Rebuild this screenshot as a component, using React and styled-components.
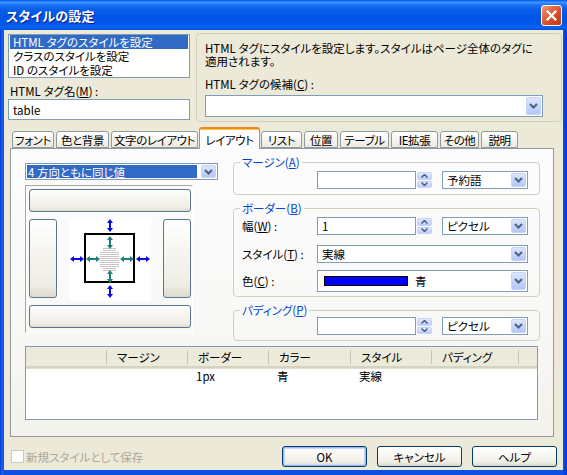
import React from "react";
import styled, { createGlobalStyle } from "styled-components";

const FONT = `"Noto Sans CJK JP", "Noto Sans", sans-serif`;

const Global = createGlobalStyle`
  html, body { margin: 0; padding: 0; background: #ece9d8; }
  body { font-family: ${FONT}; font-size: 11.5px; color: #000; font-feature-settings: "palt"; }
  * { box-sizing: border-box; }
  u { text-decoration: underline; text-underline-offset: 1px; }
`;

const Window = styled.div`
  width: 567px;
  height: 475px;
  display: flex;
  flex-direction: column;
  background: linear-gradient(to right, #0831d9 0, #166aee 2px, #0d4fe0 4px, #0d4fe0 563px, #0831d9 567px);
  overflow: hidden;
`;

const TitleBar = styled.div`
  height: 30px;
  flex: none;
  display: flex;
  align-items: center;
  justify-content: space-between;
  padding: 1px 5px 0 6px;
  background: linear-gradient(
    to bottom,
    #0058ee 0%,
    #3d95ff 8%,
    #1f74f7 16%,
    #0a5fe8 32%,
    #0055e5 55%,
    #0058ea 80%,
    #0a63f0 92%,
    #0050d8 100%
  );
`;

const Title = styled.div`
  color: #fff;
  font-weight: bold;
  font-size: 13px;
  letter-spacing: 0.2px;
  text-shadow: 1px 1px 0 #0a1e8c;
`;

const CloseButton = styled.div`
  width: 21px;
  height: 21px;
  border: 1px solid #fff;
  border-radius: 3px;
  background: linear-gradient(135deg, #f09a7c 0%, #e06a44 35%, #d2451e 70%, #c33a15 100%);
  display: flex;
  align-items: center;
  justify-content: center;
`;

const Client = styled.div`
  flex: 1;
  margin: 0 4px 5px 4px;
  background: #ece9d8;
  display: flex;
  flex-direction: column;
`;

const TopSection = styled.div`
  display: flex;
  align-items: flex-start;
  gap: 6px;
  padding: 3px 1px 0 4px;
`;

const LeftCol = styled.div`
  width: 182px;
  margin-top: 1px;
  display: flex;
  flex-direction: column;
`;

const ListBox = styled.div`
  height: 44px;
  border: 1px solid #7f9db9;
  background: #fff;
  padding: 0 1px;
`;

const ListItem = styled.div`
  height: 14px;
  line-height: 14px;
  padding-left: 3px;
  white-space: nowrap;
  background: ${(p) => (p.$sel ? "#316ac5" : "transparent")};
  color: ${(p) => (p.$sel ? "#fff" : "#000")};
`;

const FieldLabel = styled.div`
  line-height: 14px;
  white-space: nowrap;
  margin-top: ${(p) => p.$mt || 0}px;
  padding-left: ${(p) => p.$pl || 0}px;
`;

const TextBox = styled.div`
  height: ${(p) => p.$h || 21}px;
  margin-top: ${(p) => p.$mt || 0}px;
  border: 1px solid #7f9db9;
  background: #fff;
  display: flex;
  align-items: center;
  padding-left: 4px;
`;

const InfoPanel = styled.div`
  width: 366px;
  height: 89px;
  border: 1px solid #d0d0bf;
  border-radius: 4px;
  padding: 8px 0 0 8px;
  display: flex;
  flex-direction: column;
`;

const InfoText = styled.div`
  line-height: 13px;
  white-space: nowrap;
`;

const ComboBox = styled.div`
  display: flex;
  align-items: stretch;
  width: ${(p) => p.$w}px;
  height: ${(p) => p.$h || 18}px;
  margin-top: ${(p) => p.$mt || 0}px;
  border: 1px solid #7f9db9;
  background: #fff;
  padding: 1px;
  flex: none;
`;

const ComboText = styled.div`
  flex: 1;
  display: flex;
  align-items: center;
  gap: 7px;
  padding-left: ${(p) => p.$pl ?? 3}px;
  margin-right: ${(p) => (p.$sel ? 4 : 0)}px;
  white-space: nowrap;
  background: ${(p) => (p.$sel ? "#316ac5" : "transparent")};
  color: ${(p) => (p.$sel ? "#fff" : "#000")};
`;

const DropButton = styled.div`
  width: 15px;
  flex: none;
  border: 1px solid #c3d3fd;
  border-radius: 2px;
  background: linear-gradient(to bottom, #dce6fd 0%, #c6d6fb 50%, #b4c8f6 100%);
  display: flex;
  align-items: center;
  justify-content: center;
`;

const SpinWrap = styled.div`
  display: flex;
  align-items: stretch;
  height: 18px;
  flex: none;
  margin-right: 10px;
`;

const SpinInput = styled.div`
  width: 99px;
  border: 1px solid #7f9db9;
  background: #fff;
  display: flex;
  align-items: center;
  padding-left: 4px;
`;

const SpinButtons = styled.div`
  width: 16px;
  display: flex;
  flex-direction: column;
  gap: 1px;
  padding: 1px 0 1px 1px;
`;

const SpinHalf = styled.div`
  flex: 1;
  border: 1px solid #c3d3fd;
  border-radius: 2px;
  background: linear-gradient(to bottom, #dfe8fd, #bccef8);
  display: flex;
  align-items: center;
  justify-content: center;
`;

const TabStrip = styled.div`
  display: flex;
  align-items: flex-end;
  gap: 2px;
  height: 21px;
  margin-top: 5px;
  padding-left: 8px;
`;

const Tab = styled.div`
  position: relative;
  width: ${(p) => p.$w}px;
  height: ${(p) => (p.$active ? 22 : 17)}px;
  margin: ${(p) => (p.$active ? "0 -1px -1px -1px" : "0")};
  z-index: ${(p) => (p.$active ? 2 : 1)};
  border: 1px solid #919b9c;
  border-bottom: ${(p) => (p.$active ? "none" : "1px solid #919b9c")};
  border-top: ${(p) => (p.$active ? "2px solid #e68b2c" : "1px solid #919b9c")};
  border-radius: 3px 3px 0 0;
  box-shadow: ${(p) => (p.$active ? "inset 0 1px 0 #ffc83c" : "none")};
  background: ${(p) =>
    p.$active ? "#fcfcfe" : "linear-gradient(to bottom, #ffffff 0%, #f6f5f1 50%, #ebe9e0 100%)"};
  display: flex;
  align-items: center;
  justify-content: center;
  white-space: nowrap;
  line-height: 12px;
  letter-spacing: -0.4px;
  padding-top: ${(p) => (p.$active ? 1 : 0)}px;
`;

const TabPanel = styled.div`
  margin-left: 6px;
  width: 544px;
  height: 289px;
  border: 1px solid #919b9c;
  background: linear-gradient(to bottom, #fcfcfe 0%, #f8f8f6 60%, #f3f2ec 100%);
  padding: 7px 0 0 14px;
  display: flex;
  flex-direction: column;
`;

const PanelTop = styled.div`
  display: flex;
  align-items: flex-start;
  gap: 15px;
`;

const LeftPane = styled.div`
  width: 193px;
  margin-top: 7px;
  display: flex;
  flex-direction: column;
`;

const PreviewFrame = styled.div`
  width: 168px;
  margin-top: 5px;
  border-top: 1px solid #aca899;
  border-left: 1px solid #aca899;
  border-right: 1px solid #fff;
  border-bottom: 1px solid #fff;
  padding: 3px 1px 4px 3px;
  display: flex;
  flex-direction: column;
  gap: 7px;
`;

const SideButton = styled.div`
  height: ${(p) => p.$h}px;
  border: 1px solid #5f7590;
  border-radius: 3px;
  background: linear-gradient(to bottom, #ffffff 0%, #f6f5f0 40%, #eeede5 85%, #dedbce 100%);
`;

const MiddleRow = styled.div`
  height: 79px;
  display: grid;
  grid-template-columns: 28px 1fr 28px;
  align-items: stretch;
`;

const DiagramArea = styled.div`
  width: 82px;
  justify-self: center;
  background: #fff;
`;

const RightPane = styled.div`
  width: 307px;
  display: flex;
  flex-direction: column;
  gap: 7px;
`;

const Group = styled.fieldset`
  margin: 0;
  min-width: 0;
  padding: ${(p) => p.$pt ?? 3}px 8px ${(p) => p.$pb ?? 5}px 8px;
  border: 1px solid #d0d0bf;
  border-radius: 4px;
  display: flex;
  flex-direction: column;
`;

const Legend = styled.legend`
  padding: 0 2px;
  margin-left: -2px;
  line-height: 12px;
  color: #0046d5;
  white-space: nowrap;
`;

const Row = styled.div`
  display: flex;
  align-items: center;
  margin-top: ${(p) => p.$mt || 0}px;
`;

const RowLabel = styled.div`
  width: 75px;
  flex: none;
  white-space: nowrap;
`;

const Swatch = styled.div`
  width: 84px;
  height: 10px;
  margin-left: 5px;
  background: #0000ff;
  border: 1px solid #000;
`;

const ListView = styled.div`
  width: 513px;
  height: 74px;
  margin-top: 5px;
  border: 1px solid #7f9db9;
  background: #fff;
  display: flex;
  flex-direction: column;
`;

const COLS = "81px 81px 81px 82px 81px 87px 1fr";

const HeaderRow = styled.div`
  display: grid;
  grid-template-columns: ${COLS};
  height: 21px;
  background: #ebeadb;
  border-bottom: 2px solid #d6d2c2;
  box-shadow: 0 1px 0 #e2decd;
`;

const HeaderCell = styled.div`
  display: flex;
  align-items: center;
  padding-left: 10px;
  white-space: nowrap;
  background: ${(p) =>
    p.$last ? "none" : "linear-gradient(#c7c5b2, #c7c5b2) right 3px / 1px 14px no-repeat"};
`;

const DataRow = styled.div`
  display: grid;
  grid-template-columns: ${COLS};
  height: 14px;
  margin-top: 1px;
`;

const DataCell = styled.div`
  line-height: 14px;
  padding-left: 8px;
  white-space: nowrap;
`;

const BottomBar = styled.div`
  display: flex;
  align-items: center;
  margin-top: 9px;
  padding: 0 6px 0 7px;
`;

const CheckBox = styled.div`
  width: 13px;
  height: 13px;
  border: 1px solid #cac8bb;
  background: #fff;
`;

const DisabledText = styled.div`
  color: #aca899;
  margin-left: 2px;
  white-space: nowrap;
`;

const ButtonGroup = styled.div`
  margin-left: auto;
  display: flex;
  gap: 10px;
`;

const PushButton = styled.div`
  width: 85px;
  height: 21px;
  border: 1px solid #003c74;
  border-radius: 3px;
  background: linear-gradient(to bottom, #ffffff 0%, #f7f6f1 45%, #efeee7 80%, #d8d5c8 100%);
  box-shadow: ${(p) => (p.$default ? "inset 0 0 0 1px #9cb8ef, inset 0 0 0 2px #c6d7f7" : "none")};
  display: flex;
  align-items: center;
  justify-content: center;
  white-space: nowrap;
`;

/* ---------- drawings ---------- */

const Chevron = () => (
  <svg width="9" height="6" viewBox="0 0 9 6">
    <path d="M1 1 L4.5 4.5 L8 1" fill="none" stroke="#4d6185" strokeWidth="2" />
  </svg>
);

const SpinArrow = ({ up }) => (
  <svg width="7" height="4" viewBox="0 0 7 4">
    {up ? (
      <path d="M0.5 3.5 L3.5 0.5 L6.5 3.5" fill="none" stroke="#4d6185" strokeWidth="1.5" />
    ) : (
      <path d="M0.5 0.5 L3.5 3.5 L6.5 0.5" fill="none" stroke="#4d6185" strokeWidth="1.5" />
    )}
  </svg>
);

const CloseX = () => (
  <svg width="11" height="11" viewBox="0 0 11 11">
    <path d="M1.5 1.5 L9.5 9.5 M9.5 1.5 L1.5 9.5" stroke="#fff" strokeWidth="2.2" strokeLinecap="square" />
  </svg>
);

const ArrowV = ({ x, y1, y2, c }) => (
  <g fill={c}>
    <rect x={x - 1} y={y1 + 3} width="2" height={y2 - y1 - 6} />
    <polygon points={`${x},${y1} ${x - 3},${y1 + 4} ${x + 3},${y1 + 4}`} />
    <polygon points={`${x},${y2} ${x - 3},${y2 - 4} ${x + 3},${y2 - 4}`} />
  </g>
);

const ArrowH = ({ y, x1, x2, c }) => (
  <g fill={c}>
    <rect x={x1 + 3} y={y - 1} width={x2 - x1 - 6} height="2" />
    <polygon points={`${x1},${y} ${x1 + 4},${y - 3} ${x1 + 4},${y + 3}`} />
    <polygon points={`${x2},${y} ${x2 - 4},${y - 3} ${x2 - 4},${y + 3}`} />
  </g>
);

const BoxDiagram = () => {
  const hatch = [];
  for (let y = 29; y <= 51; y += 2) {
    const inset = y < 32 || y > 48 ? 3 : 0;
    hatch.push(<rect key={y} x={31 + inset} y={y} width={19 - inset * 2} height="1" fill="#c9c3c6" />);
  }
  const blue = "#0a0ae6";
  const teal = "#1f7f7a";
  return (
    <svg width="82" height="79" viewBox="0 0 82 79">
      {hatch}
      <rect x="16" y="15" width="49" height="48" fill="none" stroke="#000" strokeWidth="2" />
      <ArrowV x={41} y1={0} y2={13} c={blue} />
      <ArrowV x={41} y1={66} y2={79} c={blue} />
      <ArrowH y={40} x1={1} x2={15} c={blue} />
      <ArrowH y={40} x1={67} x2={81} c={blue} />
      <ArrowV x={41} y1={17} y2={30} c={teal} />
      <ArrowV x={41} y1={51} y2={64} c={teal} />
      <ArrowH y={40} x1={17} x2={31} c={teal} />
      <ArrowH y={40} x1={51} x2={65} c={teal} />
    </svg>
  );
};

/* ---------- composite parts ---------- */

const Combo = ({ w, h, mt, sel, children, pl }) => (
  <ComboBox $w={w} $h={h} $mt={mt}>
    <ComboText $sel={sel} $pl={pl}>{children}</ComboText>
    <DropButton>
      <Chevron />
    </DropButton>
  </ComboBox>
);

const Spin = ({ value }) => (
  <SpinWrap>
    <SpinInput>{value}</SpinInput>
    <SpinButtons>
      <SpinHalf>
        <SpinArrow up />
      </SpinHalf>
      <SpinHalf>
        <SpinArrow />
      </SpinHalf>
    </SpinButtons>
  </SpinWrap>
);

const tabs = [
  { label: "フォント", w: 42 },
  { label: "色と背景", w: 53 },
  { label: "文字のレイアウト", w: 87 },
  { label: "レイアウト", w: 61, active: true },
  { label: "リスト", w: 41 },
  { label: "位置", w: 34 },
  { label: "テーブル", w: 49 },
  { label: "IE拡張", w: 47 },
  { label: "その他", w: 39 },
  { label: "説明", w: 37 },
];

export default function App() {
  return (
    <>
      <Global />
      <Window>
        <TitleBar>
          <Title>スタイルの設定</Title>
          <CloseButton>
            <CloseX />
          </CloseButton>
        </TitleBar>
        <Client>
          <TopSection>
            <LeftCol>
              <ListBox>
                <ListItem $sel>HTML タグのスタイルを設定</ListItem>
                <ListItem>クラスのスタイルを設定</ListItem>
                <ListItem>ID のスタイルを設定</ListItem>
              </ListBox>
              <FieldLabel $mt={6} $pl={2}>
                HTML タグ名(<u>M</u>) :
              </FieldLabel>
              <TextBox $mt={1}>table</TextBox>
            </LeftCol>
            <InfoPanel>
              <InfoText>HTML タグにスタイルを設定します。スタイルはページ全体のタグに</InfoText>
              <InfoText>適用されます。</InfoText>
              <FieldLabel $mt={9}>
                HTML タグの候補(<u>C</u>) :
              </FieldLabel>
              <Combo w={338} h={22} mt={4} />
            </InfoPanel>
          </TopSection>

          <TabStrip>
            {tabs.map((t) => (
              <Tab key={t.label} $w={t.w} $active={t.active}>
                {t.label}
              </Tab>
            ))}
          </TabStrip>

          <TabPanel>
            <PanelTop>
              <LeftPane>
                <Combo w={193} h={17} sel pl={1}>
                  4 方向ともに同じ値
                </Combo>
                <PreviewFrame>
                  <SideButton $h={23} />
                  <MiddleRow>
                    <SideButton $h={79} />
                    <DiagramArea>
                      <BoxDiagram />
                    </DiagramArea>
                    <SideButton $h={79} />
                  </MiddleRow>
                  <SideButton $h={23} />
                </PreviewFrame>
              </LeftPane>

              <RightPane>
                <Group>
                  <Legend>
                    マージン(<u>A</u>)
                  </Legend>
                  <Row>
                    <RowLabel />
                    <Spin value="" />
                    <Combo w={86} h={18}>
                      予約語
                    </Combo>
                  </Row>
                </Group>

                <Group $pb={4}>
                  <Legend>
                    ボーダー(<u>B</u>)
                  </Legend>
                  <Row>
                    <RowLabel>
                      幅(<u>W</u>) :
                    </RowLabel>
                    <Spin value="1" />
                    <Combo w={86} h={18}>
                      ピクセル
                    </Combo>
                  </Row>
                  <Row $mt={10}>
                    <RowLabel>
                      スタイル(<u>T</u>) :
                    </RowLabel>
                    <Combo w={211} h={18}>
                      実線
                    </Combo>
                  </Row>
                  <Row $mt={7}>
                    <RowLabel>
                      色(<u>C</u>) :
                    </RowLabel>
                    <Combo w={211} h={22} pl={0}>
                      <Swatch />
                      青
                    </Combo>
                  </Row>
                </Group>

                <Group $pt={1}>
                  <Legend>
                    パディング(<u>P</u>)
                  </Legend>
                  <Row>
                    <RowLabel />
                    <Spin value="" />
                    <Combo w={86} h={18}>
                      ピクセル
                    </Combo>
                  </Row>
                </Group>
              </RightPane>
            </PanelTop>

            <ListView>
              <HeaderRow>
                <HeaderCell />
                <HeaderCell>マージン</HeaderCell>
                <HeaderCell>ボーダー</HeaderCell>
                <HeaderCell>カラー</HeaderCell>
                <HeaderCell>スタイル</HeaderCell>
                <HeaderCell>パディング</HeaderCell>
                <HeaderCell $last />
              </HeaderRow>
              <DataRow>
                <DataCell />
                <DataCell />
                <DataCell>1px</DataCell>
                <DataCell>青</DataCell>
                <DataCell>実線</DataCell>
                <DataCell />
                <DataCell />
              </DataRow>
            </ListView>
          </TabPanel>

          <BottomBar>
            <CheckBox />
            <DisabledText>新規スタイルとして保存</DisabledText>
            <ButtonGroup>
              <PushButton $default>OK</PushButton>
              <PushButton>キャンセル</PushButton>
              <PushButton>ヘルプ</PushButton>
            </ButtonGroup>
          </BottomBar>
        </Client>
      </Window>
    </>
  );
}
